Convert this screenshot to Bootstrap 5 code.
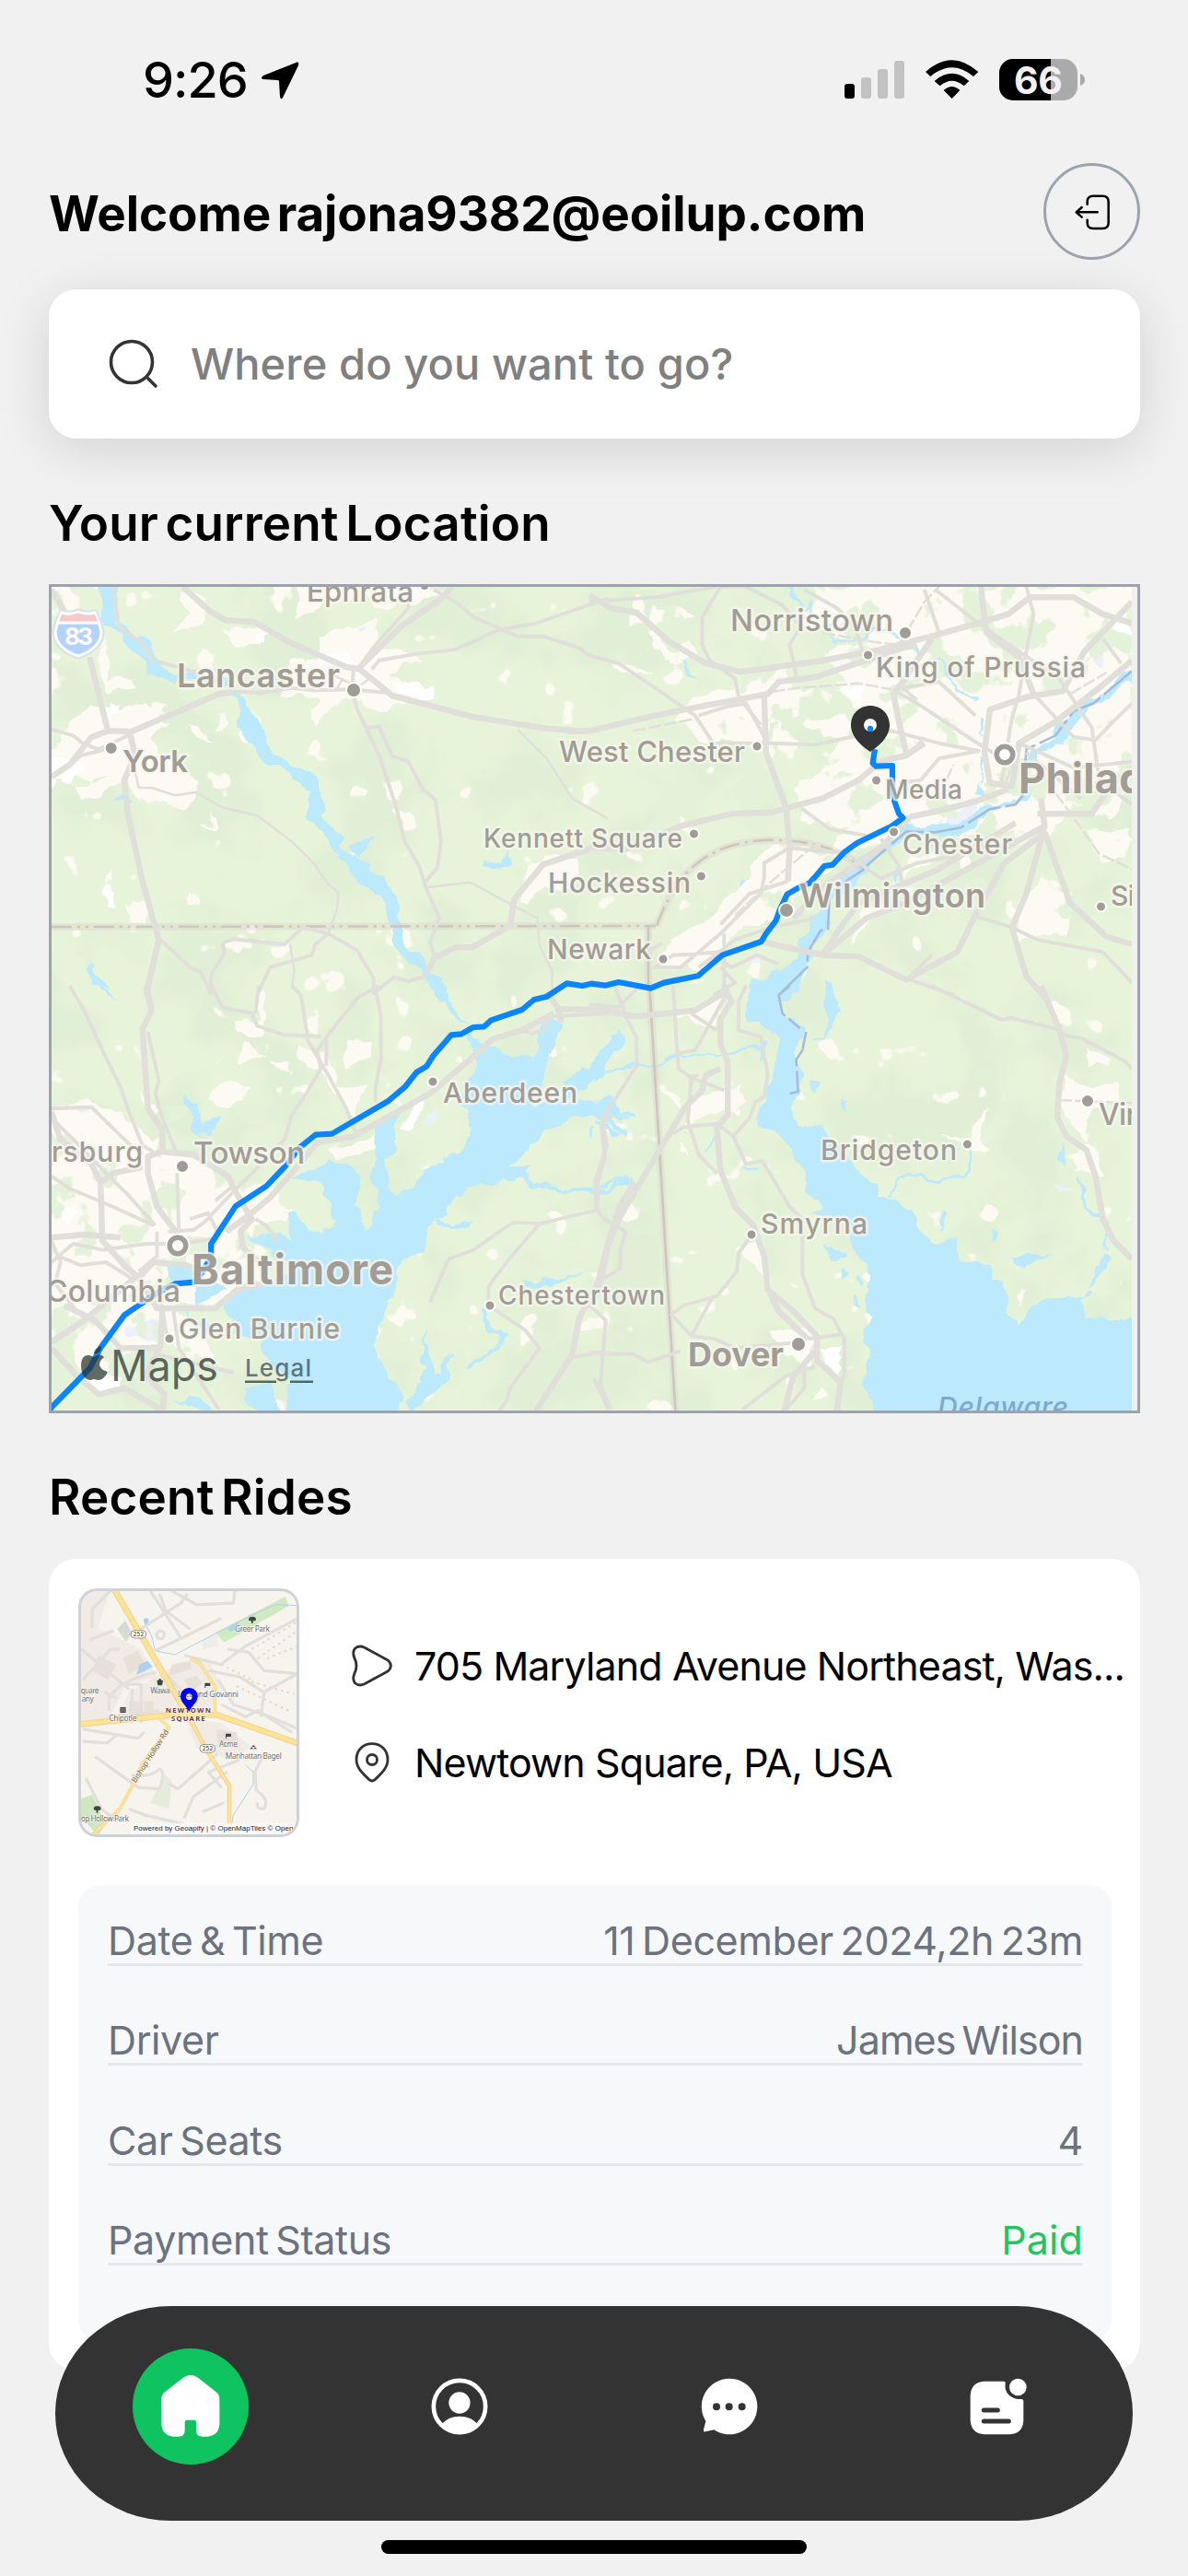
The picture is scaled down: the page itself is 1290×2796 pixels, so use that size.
<!DOCTYPE html>
<html lang="en">
<head>
<meta charset="utf-8">
<meta name="viewport" content="width=device-width, initial-scale=1">
<title>Rides</title>
<link href="https://cdn.jsdelivr.net/npm/bootstrap@5.3.0/dist/css/bootstrap.min.css" rel="stylesheet">
<style>
body{background:#f1f1f1;font-family:Inter,"Liberation Sans",sans-serif;color:#000;height:2796px;overflow:hidden}
.screen{width:1290px;height:2796px;padding:0 52px 0 53px}
.statusbar{height:177px;padding:64px 59px 0 102px}
.clock{font-size:54px;font-weight:500;line-height:46px;letter-spacing:-1px}
.arrow{margin-left:14px}
.batt{width:94px;height:45px}
.hello{font-size:53px;font-weight:700;line-height:64px;letter-spacing:-.1px;word-spacing:-6px;padding-top:5px;white-space:nowrap}
.round-btn{width:105px;height:105px;border:3px solid #9ca3af;background:none}
.searchbox{height:162px;margin-top:32px;border-radius:30px;box-shadow:0 12px 60px rgba(0,0,0,.13);padding-left:65px;font-size:47px;font-weight:500;color:#808080;letter-spacing:.1px}
.heading{font-size:53px;font-weight:600;line-height:64px;letter-spacing:.15px;word-spacing:-6px;margin:60px 0 34px}
.mapbox{height:900px;border:3px solid #9ca3af}
.heading2{margin:59px 0 35px}
.ride{border-radius:30px;height:881px;padding:32px 31px 32px 32px}
.thumb{width:240px;height:270px;border-radius:20px;overflow:hidden}
.stops{padding:59px 0 0 57px;font-size:43px;line-height:50px;letter-spacing:-.9px;white-space:nowrap}
.stops .stop{height:50px;margin-bottom:55px}
.stops svg{width:44px;margin-right:24px}
.panel{background:#f7f8fa;border-radius:24px;margin-top:52px;height:495px;padding:35px 31px 0 32px;font-size:43px;color:#6b7280;letter-spacing:-.4px;word-spacing:-4px}
.line-row{line-height:50px;border-bottom:3px solid #e5e7eb;margin-bottom:55.3px}
.snug{letter-spacing:-.95px}
.paid{color:#22c55e;letter-spacing:.1px}
.dock{position:absolute;left:60px;top:2503px;width:1170px;height:233px;border-radius:126px/117px;background:#333;padding:0 0 16px 1px}
.home-disc{width:126px;height:126px;background:#0fc360}
.indicator{position:absolute;left:414px;top:2757px;width:462px;height:15px;background:#000}
.halo text{paint-order:stroke;stroke:#f7f6ee;stroke-width:5px;stroke-opacity:.75;fill:#a19c95;stroke-linejoin:round;font-family:Inter,sans-serif;font-weight:500}
.halo .bd{font-weight:700}
.halo .sb{font-weight:600}
.roads path{fill:none;stroke:#e1dfda;stroke-width:4;vector-effect:non-scaling-stroke;stroke-linejoin:round}
.roads .w{stroke-width:6.5}
.roads .n{stroke-width:2.5}
.roads .d{stroke-dasharray:14 3}
.route path{fill:none;stroke:#0a84ff;stroke-width:6.2;vector-effect:non-scaling-stroke;stroke-linejoin:round}
.border-line path{fill:none;stroke:#cfc6c0;stroke-width:2.6;vector-effect:non-scaling-stroke}
.border-line .glow{stroke:#dccfca;stroke-width:8;opacity:.35}
.border-line .river{stroke:#a5bddb;stroke-dasharray:40 5}
.tl text{font-family:"Noto Sans",sans-serif;fill:#6d7178;font-size:25px;paint-order:stroke;stroke:#f7f4ee;stroke-width:4px}
.st path{fill:none;stroke:#e2dfdc;stroke-width:9;stroke-linejoin:round}
.si path{fill:none;stroke:#fff;stroke-width:6;stroke-linejoin:round}
</style>
</head>
<body>
<main class="screen position-relative d-flex flex-column">
  <div class="statusbar d-flex justify-content-between align-items-start flex-shrink-0">
    <div class="d-flex align-items-start">
      <span class="clock">9:26</span>
      <svg class="arrow" width="42" height="44" viewBox="0 0 42 44"><path d="M39.5 3.5Q42 3 41 7L24 42Q22 45 21 41L20 24Q20 23 18 23L3 22Q-1 21 3 18Z"/></svg>
    </div>
    <div class="d-flex align-items-start">
      <svg width="66" height="45" viewBox="0 0 66 45"><rect y="27" width="11" height="16" rx="3"/><g fill="#c2c2c2"><rect x="18" y="20" width="11" height="23" rx="3"/><rect x="36" y="11" width="11" height="32" rx="3"/><rect x="54" y="2" width="11" height="41" rx="3"/></g></svg>
      <svg width="58" height="45" viewBox="342 42 174 135" style="margin:0 22px"><path d="M342 84Q428 7 514 84L498 99Q428 40 358 99ZM371 114Q428 65 484 114L467 130Q428 97 389 130ZM401 144Q428 120 454 144L428 171Z"/></svg>
      <svg class="batt" viewBox="0 0 94 45"><defs><clipPath id="bc"><rect width="85" height="45" rx="15"/></clipPath></defs><g clip-path="url(#bc)"><path fill="#aaa" d="M0 0h85v45H0z"/><path d="M0 0h56v45H0z"/></g><path fill="#aaa" d="M88 16Q93 18 93 22.500T88 29Z"/><text x="16" y="37.500" font-size="41" font-weight="700" textLength="53" fill="#f1f1f1">66</text></svg>
    </div>
  </div>

  <header class="d-flex justify-content-between align-items-center flex-shrink-0">
    <h1 class="hello mb-0">Welcome rajona9382@eoilup.com</h1>
    <button class="round-btn rounded-circle p-0 d-flex align-items-center justify-content-center" aria-label="Sign out">
      <svg width="99" height="99" viewBox="738 389 297 297" fill="none" stroke="#000" stroke-width="7.500" stroke-linecap="round" stroke-linejoin="round"><path d="M872 514V506Q872 487 891 487H922Q941 487 941 506V574Q941 593 922 593H891Q872 593 872 574V565M905 540H837M854 524L836 540L854 556"/></svg>
    </button>
  </header>

  <div class="searchbox bg-white d-flex align-items-center flex-shrink-0">
    <svg width="54" height="54" viewBox="0 0 54 54" fill="none" stroke="#333" stroke-width="3.600" stroke-linecap="round"><circle cx="25" cy="25" r="22.500"/><path d="M43 43L51 51"/></svg>
    <span style="margin-left:35px">Where do you want to go?</span>
  </div>

  <h2 class="heading">Your current Location</h2>

  <div class="mapbox flex-shrink-0">
    <svg class="d-block" width="1179" height="894" viewBox="56 637 1179 894">
      <defs>
        <filter id="rough" x="0" y="0" width="100%" height="100%" color-interpolation-filters="sRGB"><feTurbulence type="fractalNoise" baseFrequency=".035" numOctaves="3" seed="4"/><feDisplacementMap in="SourceGraphic" scale="22" xChannelSelector="R" yChannelSelector="G"/></filter>
        <filter id="forest" x="0" y="0" width="100%" height="100%" color-interpolation-filters="sRGB"><feTurbulence type="fractalNoise" baseFrequency=".011" numOctaves="4" seed="9"/><feColorMatrix values="0 0 0 0 .88  0 0 0 0 .937  0 0 0 0 .835  5 0 0 0 -2.300"/></filter>
        <filter id="fields" x="0" y="0" width="100%" height="100%" color-interpolation-filters="sRGB"><feTurbulence type="fractalNoise" baseFrequency=".024" numOctaves="3" seed="21"/><feColorMatrix values="0 0 0 0 .989  0 0 0 0 .98  0 0 0 0 .947  0 26 0 0 -18.700"/></filter>
        <filter id="groves" x="0" y="0" width="100%" height="100%" color-interpolation-filters="sRGB"><feTurbulence type="fractalNoise" baseFrequency=".024" numOctaves="4" seed="33" result="n"/><feColorMatrix in="n" values="0 0 0 0 .894  0 0 0 0 .949  0 0 0 0 .85  0 0 22 0 -12.600"/><feComposite in2="SourceGraphic" operator="in"/></filter>
      </defs>
      <path fill="#e7f4da" d="M56 637h1180v896H56z"/>
      <rect x="56" y="637" width="1180" height="896" filter="url(#forest)"/>
      <rect x="56" y="637" width="1180" height="896" filter="url(#fields)"/>

      <!-- built-up areas -->
      <g filter="url(#rough)" fill="#fcfaf2">
        <path fill="none" d="M20 600h1260v970H20z"/>
        <g transform="translate(40 620) scale(.39541 .33333)">
          <path d="M40 50H80L125 100L100 125L60 110ZM170 220L210 300L190 350L260 350L270 390L200 400L160 320ZM110 470L180 440L330 440L370 500L300 530L330 600L400 640L460 690L400 770L290 760L240 680L130 750L100 700L190 660L40 670V590ZM390 70L470 90L440 190L360 190L410 140ZM520 190H640L620 235L540 240ZM720 50H1120L1040 110L930 115L900 60L730 140ZM770 215L860 175L930 150L940 240L1060 290L960 330L1060 380L1020 440L920 450L850 400L780 500L750 460L770 420L680 390V300L780 290ZM420 500L490 570L430 550ZM500 460L530 490L490 520ZM240 1080L310 1060L310 1150L250 1140ZM205 960L190 1030L215 1010ZM420 1040L440 1080L410 1085ZM480 790L490 820L455 835ZM1360 940L1470 920L1500 1010L1400 1030L1340 1090L1320 1080ZM970 700L1000 720L985 750Z"/>
        </g>
        <g transform="translate(640 620) scale(.39541 .33333)">
          <path d="M560 50H1490V690L1430 800L1330 760L1260 860L1160 830L1060 860L880 830L740 910L620 1000L560 1130L400 1160L360 1290L200 1290L190 1240L330 1130L440 990L480 920L600 890L720 840L600 800L560 700L640 660L690 560L540 480L480 500L500 620L440 560L330 560L220 480L280 420L410 380L530 310L560 370L640 380L700 360L640 260L720 230L650 200L590 180ZM170 120L280 130L220 180L300 280L220 300L170 220ZM60 280L170 330L90 330ZM1250 1000L1330 1060L1300 1180L1160 1190L1190 1060ZM880 920L960 900L860 1010ZM1370 850L1490 840V940L1400 950ZM740 1080L800 1100L720 1210Z"/>
        </g>
        <g transform="translate(40 1070) scale(.39541 .33333)">
          <path d="M40 390L150 370L230 440L300 470L360 530L420 540L560 620L620 640L720 760L600 780L560 840L600 900L640 960L520 1010L500 1050L400 1050L440 1140L520 1230L440 1260L380 1150L260 1190L200 1310L130 1290L90 1160L40 1180ZM290 340L330 400L310 430ZM540 115H610L600 30L630 10L620 170L550 160ZM720 120L780 80L770 170ZM580 190L630 240L550 240ZM710 190L800 230L830 330L900 320L870 430L790 290L720 240ZM500 310L590 330L520 410L470 370ZM640 250L700 250L690 300ZM840 190L920 190L930 240L850 260ZM790 530L950 480L930 540L820 570Z"/>
        </g>
        <g transform="translate(640 1070) scale(.39541 .33333)">
          <path d="M300 60L380 40L350 140L230 100ZM290 370L420 320L410 410L300 430L250 480ZM1300 310L1450 330L1440 370L1380 420L1370 520L1410 600L1340 610L1320 540L1370 520L1300 400ZM1370 210L1430 240V270L1370 260ZM970 480L1040 490L1100 400L1090 460L1070 500L1110 530L1050 530ZM410 860L470 830L500 980L440 890ZM500 1120L620 1120L610 1240L540 1200ZM640 1300L660 1350L610 1350ZM210 330L260 370L240 400ZM250 500L270 560L240 540Z"/>
        </g>
        <g fill="#fff">
          <path d="M275 683h18v12h-12zM342 707h40v16h-30zM118 760h12v12h-16zM426 742h44l-8 12h-30zM50 820l40 8-20 24H52zM114 964l10 8-4 10h-8zM60 1438l18-14-4 24-20 14zM98 1490h28v18H96zM450 1200l14-8-16 34-10 0zM66 1300l16 10v14l-14-4zM895 1460h18v40l-16-18zM1205 670h24v30h-20zM916 750h18v12h-14zM840 776l14 8-6 10zM880 660h10v14h-10z"/>
        </g>
        <path fill="#ecf0f8" d="M1030 880l36-12 0 14-30 14-10 0zM812 1036h14v10h-12zM140 1442l32-10v22h-30zM464 1210l12-10-2 18h-14zM310 1314l14 14-8 2zM384 678h16l-6 6h-10zM1186 700l12 4-2 20-10-8zM1146 1284l18 8-16 4z"/>
      </g>
      <rect x="690" y="637" width="545" height="360" filter="url(#groves)"/>
      <rect x="56" y="1200" width="230" height="332" filter="url(#groves)"/>

      <!-- rivers and bays -->
      <g filter="url(#rough)" fill="#bce9fc">
        <path fill="none" d="M20 600h1260v970H20z"/>
        <g transform="translate(40 620) scale(.39541 .33333)" stroke="#bce9fc" stroke-width="5">
          <path d="M163 20L185 160L225 195L270 265L310 328L400 355L445 358L515 355L527 402L560 450L572 545L600 605L690 665L745 700L752 805L790 840L835 920L885 1005L930 1050L965 1120L968 1165L980 1215L1030 1280L1070 1310L1100 1390H1122L1110 1320L1060 1270L1010 1195L998 1145L993 1075L945 990L880 940L840 895L810 830L772 790L774 695L750 665L635 595L632 540L605 470L545 395L522 345L450 345L380 330L335 300L290 225L230 180L215 110V20ZM865 895L900 865L920 870L885 935ZM210 750L240 720L265 760L235 740ZM1240 930L1285 955L1300 910V955L1280 970L1240 945ZM145 1280L165 1330L205 1370L150 1360Z"/>
        </g>
        <g transform="translate(640 620) scale(.39541 .33333)">
          <path d="M1510 300L1420 390L1330 450L1290 500L1275 540L1200 590L1195 700L1175 755L1100 770L1000 820L870 840L800 900L740 950L680 1010L665 1060L640 1100L610 1120L600 1170L560 1260L500 1300L440 1400H550L600 1290L615 1210L660 1160L670 1080L750 990L870 870L960 860L1020 845L1100 790L1200 760L1215 600L1290 560L1335 500L1380 440L1510 350ZM1075 615L1085 620L1070 700L1085 740L1065 735ZM1090 470L1105 475L1085 515L1100 545L1080 525ZM255 285L290 340L270 330ZM640 1340L665 1345V1380H650ZM410 990L430 995L410 1030ZM885 230L900 240V275L890 270ZM840 960L855 970L840 1020Z"/>
          <path fill="none" stroke="#bce9fc" stroke-width="8" d="M555 30L575 120L610 90L595 130M620 180L665 190L670 230L780 200L870 205M960 300L1010 370L1060 430"/>
        </g>
        <g transform="translate(40 1070) scale(.39541 .33333)">
          <path d="M1090 -20L1130 80L1180 130L1200 200L1190 310L1150 390L1185 400L1195 470L1165 525L1080 600L990 695L955 665L965 600L985 470L1000 425L960 430L930 470L940 560L920 600L945 720L905 810L885 760L865 700L880 615L790 570L700 620L790 640L820 720L825 790L740 800L700 730L680 760L700 830L570 800L640 860L690 900L680 950L510 1010L515 1060L560 1130L610 1140L650 1240L690 1290L680 1400H990L1000 1330L945 1200L925 1160L960 1080L980 1000L1010 905L1060 860L1075 760L1140 720L1170 655L1300 640L1350 600L1290 600L1350 540L1400 470L1500 420L1590 430L1570 370L1440 385L1500 330L1550 290L1600 160L1605 130L1580 150L1520 270L1450 310L1480 330L1380 400L1370 350L1410 230L1435 120L1400 115L1370 230L1310 230L1210 180L1140 60L1110 -20ZM400 370L440 380L450 440L500 440L480 490L440 460ZM360 905L430 905V970L380 940ZM430 970L510 980L440 1060ZM400 1060L460 1100L510 1120L460 1130ZM1060 1130L1090 1250L1140 1190L1120 1280L1040 1390L1000 1370L1060 1280ZM1340 950L1450 965L1520 940L1440 980L1340 975ZM170 10L235 50L180 30ZM560 1320L640 1300L680 1400L600 1380ZM380 1350L450 1350L480 1400Z"/>
          <path fill="none" stroke="#bce9fc" stroke-width="14" d="M1300 610L1370 650L1568 670L1640 630M1240 1050L1250 1110L1290 1140L1260 1180L1180 1240M1080 760L1200 780M1540 440L1590 470"/>
        </g>
        <g transform="translate(640 1070) scale(.39541 .33333)">
          <path d="M440 -20L430 110L520 150L510 300L480 330L470 450L560 540L590 600L595 670L630 700L620 740L700 760L720 840L765 910L768 1050L780 1090L755 1130L760 1240L775 1420L1510 1420V1090L1365 1075V1010L1270 1035L1210 1040L1190 1100L1150 1060L1140 960L1100 950L1090 915L1030 880L1020 820L950 835L905 790L895 730L860 700L790 685L775 630L720 590L700 540L640 460L560 435L555 370L575 345L570 240L595 150L530 90L520 30L550 -20ZM645 0L665 -10L690 80L660 140L610 170L655 110ZM600 300L640 330L620 360ZM690 360L705 360L700 420L690 400ZM640 840L700 860L680 900L650 890ZM690 920L720 930L710 960ZM1290 490L1310 520L1320 580L1295 560ZM1150 890L1200 860L1260 880L1190 920ZM1090 800L1120 810L1110 835ZM1420 860L1440 870L1400 960L1375 980ZM1370 980L1390 1000L1360 1030ZM35 240L75 140L90 160L40 290L0 330Z"/>
          <path fill="none" stroke="#bce9fc" stroke-width="9" d="M1040 530V620L950 635L910 610L850 630L830 690M975 730L960 800M1345 630L1370 720L1410 770L1430 850M0 270L120 265L240 240L480 205M470 180L475 250M0 390L40 430L130 425M40 430L100 475M0 660L110 630M320 530L340 480M415 610L460 595M740 950L750 980M725 1010L750 1030M0 500L10 460"/>
        </g>
      </g>

      <!-- state borders -->
      <g class="border-line">
        <g transform="translate(40 620) scale(.39541 .33333)"><path class="glow" d="M40 1158L1700 1155"/><path stroke-dasharray="22 6 3 6 3 6" d="M40 1158L1700 1155"/></g>
        <g transform="translate(640 620) scale(.39541 .33333)"><path class="glow" d="M185 1155C230 1010 300 880 500 875C620 880 680 900 755 970"/><path stroke-dasharray="22 6 3 6" d="M185 1155C230 1010 300 880 500 875C620 880 680 900 755 970"/><path class="glow" d="M162 1155V1360"/><path stroke-width="2" d="M162 1155V1360"/>
          <path class="river" d="M1490 325L1385 430L1330 455L1280 535L1200 580L1190 730L1170 760L1100 775L1020 835L950 850L870 848L755 965M755 970L710 1005L660 1050L655 1165L635 1170L600 1240L598 1290L520 1380"/></g>
        <g transform="translate(640 1070) scale(.39541 .33333)"><path class="glow" d="M165 0L237 1400"/><path d="M165 0L237 1400"/><path class="river" d="M550 0L520 30L530 90L578 138M595 150L585 210L568 240L573 345L550 350"/></g>
      </g>

      <g class="roads">
        <g transform="translate(40 620) scale(.39541 .33333)">
          <path class="w" d="M40 60L75 130M145 280L195 520L260 522L500 400L545 392M400 50L480 135L520 160L595 165L700 235L850 312L885 318L940 370L975 405L1200 475L1400 512L1517 522M885 315L1000 180L1110 90L1140 50M255 525L270 600L240 680L250 790L290 1010L335 1200L300 1380M40 670L90 630L150 540L195 520M1070 1310L1090 1260L1150 1225H1195L1300 1155L1310 1070L1390 955L1517 905"/>
          <path d="M210 50L225 180L290 235L320 290L440 330M545 392L620 395L700 380L760 388L860 385L960 395L1000 412M870 318L865 385L880 450L940 600L985 760L1010 880L1050 960L1068 1030L1105 1130L1080 1210L1095 1260M905 510L940 505L975 600L1020 620L1060 710L1095 745L1110 880L1100 965L1068 1010M880 320L930 240L1020 120V60M920 320L940 290L1050 268L1150 255L1270 190L1370 170L1517 110L1568 90M1090 60L1150 100L1200 150L1320 212L1390 212L1490 250L1510 270L1568 290M40 515L100 535L125 560L170 580L250 535M90 635L120 600L190 580M340 1200L420 1290L450 1305L480 1380M930 1370L980 1322L1020 1335L1070 1318M510 1210L540 1198L680 1215L730 1160L800 1180L765 1215L755 1250L640 1290L605 1380M510 1210L515 1245L480 1310L475 1380M800 1180L880 1235L925 1325L925 1380"/>
          <path class="n" d="M265 630L280 705H315L380 730L435 720L510 770L605 795L700 880L760 950L800 1020L828 1045L825 1100L800 1180M1070 1030L1190 1013L1310 1090L1375 1130L1380 1220L1415 1300V1380M1320 515L1400 610L1470 740L1568 805M695 1215L707 1300L700 1360M890 370L920 345M800 330L870 370M840 350L820 390"/>
        </g>
        <g transform="translate(640 620) scale(.39541 .33333)">
          <path class="w" d="M0 80L60 120L130 135L220 230L320 300L415 328L620 295L800 255L960 205L1080 165L1150 140L1210 85H1330L1410 140L1490 170M-60 522L0 520L180 470L330 435L490 400L520 360L620 345L760 290L860 250L900 240M0 900L100 905L250 830L390 790L500 785L640 740L740 680L800 620L870 600L920 560M940 220L860 360L835 400L850 490L870 590M1075 50L1090 200L1180 280L1220 400M1490 100L1360 260L1300 390L1200 410L1100 450L1085 590L1100 690L1160 700L1180 560L1280 490L1400 380L1490 290M1150 710L1060 750L960 780L880 800M1240 740L1250 830L1200 1050L1160 1160L1200 1320L1260 1400M1250 830L870 1080L760 1130L640 1250M1250 850L1320 1080L1420 1190L1490 1215M640 1250L740 1255L870 1330L1010 1240L1060 1120L1140 950L1240 860M1170 820L960 970L740 1080L690 1160L640 1250M1230 790H1380L1430 700L1490 640M480 405L485 590L540 770L550 900L545 1010M470 1206L640 1250M560 1130L640 1030L800 900L880 800"/>
          <path d="M0 100L180 85L350 50M360 50L310 150V240L330 290L400 350L410 410L470 500M0 275L80 300L180 380L290 470L340 560L490 560L620 565L740 535L830 520L960 560L1070 585L960 610L910 680L850 690M360 50H430L530 110L580 180L550 240L570 350M590 60L680 120L730 180L750 260M920 60L960 200M950 60L1080 180L1190 270L1290 350L1380 510L1400 680L1490 760M1200 50L1220 140L1200 260L1180 400L1160 480L1130 700M840 390L900 430L1040 540L1120 600M900 420L860 380L960 360L1060 470M1220 400L1330 540L1390 550L1430 500L1490 430M1180 560L1330 640L1490 620M1200 590L1350 740M1410 220L1460 300M300 470L380 440L430 430L490 560M550 900L620 910L700 915L800 1000L900 950L990 930L1150 890M550 900L480 950V1000L470 1050L360 1180L250 1290L180 1290L230 1250L360 1240M300 1290L400 1200L500 1160L620 1130M360 1150L440 1050L545 1010M1050 1120L1160 1160L1230 1200L1410 1240M880 1330L1000 1380M870 1330L940 1250M1410 1240L1490 1340M580 770L660 840L760 860M800 870L850 960L870 1080M160 1240L200 1210M370 1180V1380M360 1290L400 1340L340 1380M330 1240L390 1290L460 1250L520 1280"/>
          <path class="n d" d="M120 520L290 480M460 400L570 380L690 370L740 365L830 385M640 200L780 230L850 240L920 100L960 50M870 600L920 540M1230 640L1340 820L1400 920L1490 970M980 680L1000 630M400 1120L500 1010L620 890M1170 600L1140 700M1320 400L1420 330"/>
        </g>
        <g transform="translate(40 1070) scale(.39541 .33333)">
          <path class="w" d="M300 0L315 80L290 140L305 400L345 470V540L305 555V610L330 720L400 830M345 540L430 550L525 620L550 680L590 760L560 800L565 850L610 900M520 800L580 750L640 690L700 610L770 510L870 490L960 430L1080 350L1190 240L1250 175L1330 145L1420 90M1430 75L1600 80M40 410L65 500L150 580L175 640L180 830L240 910L280 950L330 1050L490 1050L550 990L620 970M175 640L210 610L290 590M40 820L130 810L230 820M280 950L320 900L410 910L450 930M345 1050L340 1170L300 1270L350 1330L345 1385M40 1160L130 1090L210 1010L280 940M40 1180L110 1270L170 1330L240 1310L340 1380M75 1040L160 1090L230 1180L330 1180M1370 1385L1470 1200L1490 1080L1540 970L1568 840L1600 720L1640 640M1400 20L1430 70L1440 120"/>
          <path d="M90 0L130 80L180 210L230 330L250 400L290 520L320 540M305 150L335 310L325 350L345 430L385 550M40 400L150 395L240 500L290 550M40 430L100 500L190 610L250 680L325 780M40 620L90 660L210 720L320 780M480 0L510 70L590 90L605 130L680 160L780 165M610 0L600 90M700 0L725 30L745 180L800 290L850 400L880 490M940 0L880 40L800 160L770 210L780 270L740 350L700 420L680 500L600 600L540 670L460 770L430 795L360 800M795 170V260M930 10L945 100V240L930 330V380M385 610L390 800M40 900L100 840L180 860L300 840L400 840L500 820M40 830L65 900L50 970L110 1060M60 880L120 910L190 900L270 960M330 800V880L280 930M420 760L470 740L500 810L480 860M490 700L540 650M340 1020L360 1160M375 1060L390 1180L500 1380M600 760L630 780L660 830M1080 1030L1130 890L1200 860L1270 800L1310 770L1380 775L1450 755L1540 730M1380 775L1290 900L1240 980V1040L1340 1120L1380 1180L1300 1310L1290 1350L1270 1385M1540 730V640L1560 560L1550 450L1580 420M1470 1210L1540 1195L1600 1200M1530 1280L1570 1380M330 1200L540 1260M1330 145L1360 155L1390 145L1410 100L1568 90"/>
        </g>
        <g transform="translate(640 1070) scale(.39541 .33333)">
          <path class="w" d="M370 0L390 50L360 110V190L380 250V420L350 460L360 600L400 720L450 780L480 880L490 990L560 1060L625 1140V1220L690 1290L680 1385M495 1000L520 1060L600 1150M360 270L320 290L310 340L260 400L200 520L150 620L80 760L50 850L30 970L0 1050M1240 0L1290 140L1310 230L1290 320L1285 430L1310 490L1365 535L1390 620L1410 760L1440 830L1490 890M535 1385L560 1270L620 1190M0 85L60 85L130 100L290 80L380 15"/>
          <path d="M70 0L100 100L130 170V260L70 370L35 430L48 520L15 640L20 730L40 760L100 800L85 860V920L30 960M230 0L240 200L245 270L280 300L370 340M280 300L270 440L300 550L350 610M430 0L410 50V145L470 165L490 290L480 360L455 380L440 430L395 490L430 580L475 570L550 720L585 760V940L620 1050L670 1085L700 1150V1270L685 1300M395 490L350 450L260 460L230 480M280 90L350 145M440 820L410 870L405 930L350 1010L260 1040L225 1070L280 1140L345 1150L400 1180L580 1160M340 1010L280 1140M600 1150L695 1135M0 1040L45 1090L30 1300L60 1380M0 1195L120 1200L160 1225L250 1190M420 1380L540 1270L620 1240M540 1380L590 1310V1240M940 0L1130 110L1160 105L1280 140L1300 160L1350 170L1470 245L1490 270M0 60L80 70L130 10M240 220L290 210L380 20M270 300L300 290"/>
          <path class="n d" d="M1290 372L1490 382"/>
        </g>
      </g>

      <g class="route">
        <g transform="translate(640 620) scale(.39541 .33333)"><path d="M784 580L778 625L787 635L832 633V700L838 750L850 790L861 803L830 830L735 885L700 915L668 956L645 960L620 995L605 1015L575 1030L543 1052L522 1105L512 1138L485 1180L472 1206L365 1250L298 1318L205 1340L168 1358L80 1338L43 1349L5 1343L-20 1350L-62 1342L-117 1385L-152 1395L-185 1428L-270 1462L-289 1483L-319 1485L-352 1507L-379 1510L-429 1578L-447 1612L-475 1632L-507 1680L-552 1725L-707 1832L-752 1835L-797 1878L-837 1940L-887 2002L-972 2068L-1039 2190V2235L-1065 2285L-1085 2315L-1137 2320L-1187 2350L-1227 2382L-1277 2422L-1342 2528L-1372 2595L-1475 2720L-1500 2760"/></g>
      </g>

      <g class="halo">
        <text x="333" y="653" font-size="31" textLength="116">Ephrata</text>
        <text class="sb" x="192" y="746" font-size="36" textLength="177">Lancaster</text>
        <text class="sb" x="133" y="838" font-size="33" textLength="71">York</text>
        <text x="607" y="827" font-size="31" textLength="202">West Chester</text>
        <text x="525" y="920" font-size="28" textLength="216">Kennett Square</text>
        <text x="595" y="969" font-size="30" textLength="155">Hockessin</text>
        <text x="594" y="1041" font-size="30" textLength="113">Newark</text>
        <text x="793" y="685" font-size="33" textLength="177">Norristown</text>
        <text x="951" y="735" font-size="30" textLength="228">King of Prussia</text>
        <text x="961" y="867" font-size="28" textLength="84">Media</text>
        <text x="980" y="927" font-size="30" textLength="119">Chester</text>
        <text class="sb" x="868" y="985" font-size="36" textLength="202">Wilmington</text>
        <text class="bd" x="1106" y="861" font-size="45" textLength="273">Philadelphia</text>
        <text x="1206" y="983" font-size="30" textLength="150">Sicklerville</text>
        <text x="481" y="1197" font-size="30" textLength="146">Aberdeen</text>
        <text x="210" y="1263" font-size="33" textLength="121">Towson</text>
        <text x="56" y="1261" font-size="30" textLength="99">rsburg</text>
        <text class="bd" x="208" y="1394" font-size="45" textLength="219">Baltimore</text>
        <text x="50" y="1413" font-size="32" textLength="146">Columbia</text>
        <text x="194" y="1453" font-size="30" textLength="175">Glen Burnie</text>
        <text x="541" y="1416" font-size="28" textLength="181">Chestertown</text>
        <text x="891" y="1259" font-size="30" textLength="148">Bridgeton</text>
        <text x="826" y="1339" font-size="30" textLength="116">Smyrna</text>
        <text x="1193" y="1221" font-size="32" textLength="130">Vineland</text>
        <text class="bd" x="747" y="1483" font-size="36" textLength="104">Dover</text>
        <text x="1018" y="1538" font-size="30" textLength="142" font-style="italic" style="fill:#7fa8cf;stroke:none">Delaware</text>
      </g>
      <g fill="#a19c95" stroke="#fff" stroke-width="2">
        <circle cx="384" cy="749" r="8"/><circle cx="120.700" cy="812" r="7"/><circle cx="822" cy="810" r="5.500"/><circle cx="753.500" cy="905" r="5.500"/><circle cx="761.400" cy="951" r="5.500"/><circle cx="720" cy="1041" r="5.500"/><circle cx="983" cy="687" r="7"/><circle cx="942.500" cy="711" r="5.500"/><circle cx="951.600" cy="847" r="5.500"/><circle cx="970.600" cy="903" r="5.500"/><circle cx="854" cy="988" r="8"/><circle cx="1195.500" cy="984" r="5.500"/><circle cx="470" cy="1174" r="5.500"/><circle cx="198" cy="1266" r="7"/><circle cx="184" cy="1453" r="5.500"/><circle cx="532" cy="1417" r="5.500"/><circle cx="1050.400" cy="1242" r="5.500"/><circle cx="816" cy="1340" r="5.500"/><circle cx="1181" cy="1195" r="7"/><circle cx="867" cy="1459" r="8"/><circle cx="461" cy="636" r="5"/>
        <circle cx="1091" cy="819" r="12.500"/><circle cx="193" cy="1352" r="12.500"/>
      </g>
      <g fill="#fff"><circle cx="1091" cy="819" r="6"/><circle cx="193" cy="1352" r="6"/></g>

      <!-- interstate shield -->
      <path d="M67 665Q76 668 85 664Q94 668 103 665Q108 675 110 686Q109 704 85 712Q61 704 60 686Q62 675 67 665Z" fill="#b3d3fc" stroke="#d8e0ee" stroke-width="7"/>
      <path d="M67 665Q76 668 85 664Q94 668 103 665Q108 675 110 686Q109 704 85 712Q61 704 60 686Q62 675 67 665Z" fill="#b3d3fc" stroke="#fff" stroke-width="3"/>
      <path d="M67 667Q76 670 85 666Q94 670 103 667L106 675H64Z" fill="#fbc7c7"/><path d="M62 676H108" stroke="#fff" stroke-width="3"/>
      <text x="70" y="700" font-size="26" font-weight="700" textLength="31" fill="#fff">83</text>

      <!-- destination pin -->
      <path fill="#333" fill-rule="evenodd" d="M945 766C957 766 966 775 966 787C966 800 954 810 945 816C936 810 924 800 924 787C924 775 933 766 945 766ZM945 780A7 7 0 1 0 945 794A7 7 0 1 0 945 780Z"/><circle cx="945" cy="791" r="3.200" fill="#0a84ff"/>

      <g fill="#26302b" fill-opacity=".72">
        <path d="M102 1473Q109 1468 113 1473Q108 1477 108 1481Q108 1486 117 1489Q113 1498 106 1498Q102 1496 99 1498Q89 1498 88 1483Q88 1470 97 1471ZM102 1470Q102 1463 110 1461Q111 1468 102 1470Z"/>
        <text x="120" y="1498.500" font-size="46" font-weight="400" textLength="117" lengthAdjust="spacingAndGlyphs">Maps</text>
        <text x="266" y="1494" font-size="26" font-weight="500" textLength="72" fill="#3a444c">Legal</text>
        <path d="M266 1498.500h34v2.600h-34zM315 1498.500h25v2.600h-25z"/>
      </g>
      <path fill="#f1f1f1" d="M1229 637h6v895h-6z"/>
    </svg>
  </div>

  <h2 class="heading heading2">Recent Rides</h2>

  <section class="ride bg-white flex-shrink-0">
    <div class="d-flex">
      <div class="thumb flex-shrink-0">
        <svg class="d-block tl" width="240" height="270" viewBox="135 102 720 810">
          <path fill="#f7f4ee" d="M135 102h720v810H135z"/>
          <path fill="#f1ebe6" d="M135 102H240L200 230L340 300L390 390L290 420L230 540L135 530ZM300 440L470 340L560 330L600 420L560 500L440 520L250 540ZM480 520L600 540L700 620L620 660L520 620ZM540 270L590 250V290L540 300Z"/>
          <path fill="#e7dfd8" d="M280 330L330 305L355 350L300 380ZM200 320L260 350L230 400L180 370ZM440 350L500 340L505 365L430 385ZM585 560L650 570L660 620L590 620ZM300 470H335V530H300ZM350 470H380V510H350ZM480 400L520 385L540 410L500 440Z"/>
          <path fill="#cfeac0" d="M582 245L810 128L820 160L610 278Z"/><path fill="#e6ecdc" d="M415 705L440 730L430 820L370 800ZM375 395H412V425H385Z"/><path fill="#d5dbd0" d="M262 235L288 207L310 250L290 275Z"/><path fill="#cfe6c0" d="M135 790L180 775L225 870L200 905L135 840Z"/>
          <path fill="#aed0ee" d="M324 384L335 350L360 338L378 358ZM620 235L655 212L660 230L630 243ZM347 207a9 9 0 1 1 14 8q-5 10-10 0z"/>
          <path fill="none" stroke="#aed0ee" stroke-width="3" d="M352 215L375 260L385 305L450 318L580 250L720 180L780 155L850 158M680 678L705 700V740L640 840L630 900"/>
          <g class="st"><path id="s1" d="M180 230V170L240 110M400 120L420 175L500 235M330 240L470 150L490 120M370 110L470 265M645 110L640 150L520 155L440 110M385 305L480 260L600 200M400 240Q425 245 410 265Q390 270 390 250ZM235 500V460Q270 400 390 375M150 400L240 300L270 300M145 300L300 430M150 560L330 590L350 570M150 600L230 605L260 580M190 650L330 750L400 755Q420 700 400 690Q370 720 310 710M430 740L460 755L590 640M480 850L510 780L620 700M540 830L610 800M660 660L560 700L600 750M740 640L710 700L715 760Q760 790 740 820Q710 820 720 800M480 320L600 350L680 290L850 200M560 370L660 390L740 440L850 380M740 440L730 520M590 400L640 480L760 520L850 560M620 300L690 310L740 370L850 380M600 480L680 520L720 500L830 570M160 720L210 820L260 860M300 820L350 840L480 870M170 270L250 240M290 415H340V540M310 430V540M250 520L400 500M420 380L500 470M260 460L220 440"/></g>
          <g class="si"><use href="#s1"/></g>
          <g fill="none" stroke="#e8d8c8" stroke-width="6" stroke-dasharray="8 12"><path d="M700 300L850 210M720 330L850 240M600 350L700 400M650 420L820 500M680 400L850 450M750 330L850 290"/></g>
          <g fill="none" stroke-linejoin="round"><g stroke="#f1cf92"><path stroke-width="20" d="M250 102L500 530M135 545L400 518L500 510L590 515L855 608"/><path stroke-width="14" d="M500 530L560 640L627 745V912"/><path stroke-width="11" d="M500 330L530 345L580 420V510M400 525L430 555L340 680L320 730L270 820L180 905"/></g><g stroke="#fde494"><path stroke-width="14" d="M250 102L500 530M135 545L400 518L500 510L590 515L855 608"/><path stroke-width="8" d="M500 530L560 640L627 745V912M500 330L530 345L580 420V510M400 525L430 555L340 680L320 730L270 820L180 905"/></g></g>
          <g fill="#fff" stroke="#666" stroke-width="2"><rect x="306" y="239" width="50" height="25" rx="12"/><rect x="531" y="611" width="50" height="25" rx="12"/></g>
          <g font-size="19"><text x="314" y="259" style="font-size:19px;fill:#333" textLength="34">252</text><text x="539" y="631" style="font-size:19px;fill:#333" textLength="34">252</text></g>
          <g fill="#444"><path d="M690 203Q690 194 702 194Q714 194 714 203Q714 209 704 208V216H699V208Q690 209 690 203ZM185 820Q185 811 197 811Q209 811 209 820Q209 826 199 825V833H194V825Q185 826 185 820ZM391 402H411L408 418H394ZM395 402Q401 390 407 402ZM271 489h19v5h-19zM270 496h21v4h-21zM271 502h19v5h-19zM547 410h18v10h-15v6h-3zM615 575h18v10h-15v6h-3zM694 625l6-6 6 6zM706 625l5-6 6 6zM700 618l6-6 6 6z"/></g>
          <text x="645" y="243" textLength="114">Greer Park</text><text x="370" y="445" textLength="64">Wawa</text><text x="459" y="455" textLength="198">Luca and Giovanni</text><text x="143" y="444" textLength="59">quare</text><text x="146" y="472" textLength="39">any</text><text x="235" y="535" textLength="90">Chipotle</text><text x="594" y="619" textLength="60">Acme</text><text x="614" y="657" textLength="183">Manhattan Bagel</text><text x="143" y="860" textLength="157">op Hollow Park</text>
          <text transform="translate(322 737) rotate(-57)" textLength="200" style="fill:#7c6434">Bishop Hollow Rd</text>
          <text x="419" y="506" textLength="148" style="fill:#6b3d49;font-weight:700;font-size:23px">NEWTOWN</text><text x="438" y="535" textLength="110" style="fill:#6b3d49;font-weight:700;font-size:23px">SQUARE</text>
          <path fill="#00f" fill-rule="evenodd" d="M496 426C512 426 524 438 524 454C524 474 504 484 496 504C488 484 468 474 468 454C468 438 480 426 496 426ZM496 445A10 10 0 1 0 496 465A10 10 0 1 0 496 445Z"/>
          <path fill="#fff" fill-opacity=".65" d="M305 866h545v38H305z"/>
          <text x="315" y="891" textLength="520" style="font-family:'Liberation Sans';fill:#222;font-size:24px;stroke:none">Powered by Geoapify | © OpenMapTiles © Open</text>
          <path fill="#fff" fill-rule="evenodd" d="M135 102h720v810H135zM195 102Q135 102 135 162V852Q135 912 195 912H795Q855 912 855 852V162Q855 102 795 102Z"/>
          <rect x="139.500" y="106.500" width="711" height="801" rx="56" fill="none" stroke="#cdd2db" stroke-width="9"/>
        </svg>
      </div>
      <div class="stops">
        <div class="stop d-flex align-items-center">
          <svg height="46" viewBox="1026 280 132 138" fill="none" stroke="#333" stroke-width="8.500" stroke-linejoin="round"><path d="M1066 289Q1050 282 1037 292Q1027 303 1034 322Q1048 349 1034 376Q1027 395 1037 406Q1050 416 1066 409L1142 368Q1153 360 1153 349Q1153 338 1142 330Z"/></svg>
          <span>705 Maryland Avenue Northeast, Was...</span>
        </div>
        <div class="stop d-flex align-items-center">
          <svg height="46" viewBox="1026 597 132 138" fill="none" stroke="#333" stroke-width="8.500"><path d="M1092 605C1122 605 1143 627 1143 656C1143 686 1118 706 1101 722Q1092 730 1083 722C1066 706 1041 686 1041 656C1041 627 1062 605 1092 605Z"/><circle cx="1092" cy="657" r="16.500"/></svg>
          <span>Newtown Square, PA, USA</span>
        </div>
      </div>
    </div>
    <div class="panel">
      <div class="line-row d-flex justify-content-between"><span>Date &amp; Time</span><span>11 December 2024,2h 23m</span></div>
      <div class="line-row d-flex justify-content-between"><span>Driver</span><span class="snug">James Wilson</span></div>
      <div class="line-row d-flex justify-content-between"><span>Car Seats</span><span>4</span></div>
      <div class="line-row d-flex justify-content-between"><span>Payment Status</span><span class="paid">Paid</span></div>
    </div>
  </section>

  <nav class="dock d-flex align-items-center">
    <a class="flex-fill w-25 d-flex justify-content-center" href="#" aria-label="Home"><span class="home-disc rounded-circle d-flex align-items-center justify-content-center"><svg width="126" height="126" viewBox="71 57 378 378"><path fill="#fff" d="M238 151Q260 137 282 151L343 199Q354 207 354 222V304Q352 340 316 344H297Q278 343 278 324V297Q278 290 271 290H248Q241 290 241 297V324Q241 343 222 344H203Q167 340 165 304V222Q165 208 176 199Z"/></svg></span></a>
    <a class="flex-fill w-25 d-flex justify-content-center" href="#" aria-label="Profile"><svg width="62" height="62" viewBox="1047 151 186 186"><circle cx="1140" cy="244" r="84.500" fill="none" stroke="#fff" stroke-width="14"/><circle cx="1140" cy="232" r="35" fill="#fff"/><path fill="#fff" d="M1082 301Q1104 276 1140 276T1198 301Q1176 334 1140 334T1082 301Z"/></svg></a>
    <a class="flex-fill w-25 d-flex justify-content-center" href="#" aria-label="Messages"><svg width="62" height="62" viewBox="62 151 186 186"><path fill="#fff" d="M155 153A91 91 0 1 1 105 320L77 326Q70 327 71 320L78 292A91 91 0 0 1 155 153Z"/><g fill="#333"><circle cx="113" cy="245" r="12"/><circle cx="154" cy="245" r="12"/><circle cx="196" cy="245" r="12"/></g></svg></a>
    <a class="flex-fill w-25 d-flex justify-content-center" href="#" aria-label="Activity"><svg width="62" height="62" viewBox="945 151 186 186"><path fill="#fff" d="M992 162H1056Q1062 162 1061 169Q1058 192 1072 206Q1088 222 1111 220Q1120 219 1120 226V290Q1118 332 1076 335H992Q950 332 947 290V207Q950 165 992 162Z"/><circle cx="1102" cy="181" r="28" fill="#fff"/><path stroke="#333" stroke-width="15" stroke-linecap="round" d="M991 256H1036M991 292H1072"/></svg></a>
  </nav>
  <div class="indicator rounded-pill"></div>
</main>
<script src="https://cdn.jsdelivr.net/npm/bootstrap@5.3.0/dist/js/bootstrap.bundle.min.js"></script>
</body>
</html>
